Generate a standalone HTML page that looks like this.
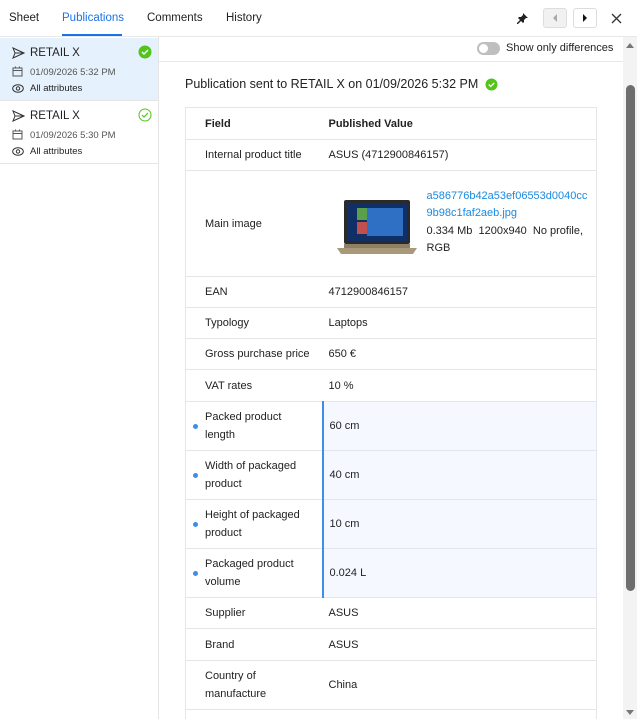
<!DOCTYPE html>
<html style="overflow:hidden;height:719px"><head><meta charset="utf-8"><style>
*{box-sizing:border-box;margin:0;padding:0}
body{width:637px;height:719px;overflow:hidden;font-family:"Liberation Sans",sans-serif;font-size:11px;color:#222;background:#fff;position:relative}
.abs{position:absolute}
.tab{position:absolute;top:12px;font-size:11.5px;color:#222}
.side{position:absolute;left:0;top:37px;width:159px;bottom:0;border-right:1px solid #e5e5e5}
.item{position:absolute;left:0;width:158px;height:63px;border-bottom:1px solid #e5e5e5}
.item .t{position:absolute;left:30px;top:9px;font-size:11.5px}
.item .d{position:absolute;left:30px;top:29px;font-size:9.5px;color:#555}
.item .a{position:absolute;left:30px;top:45px;font-size:9.5px}
table{position:absolute;left:185px;top:107px;width:412px;border-collapse:collapse;border-left:1px solid #e4e6ea;border-right:1px solid #e4e6ea}
td{border-top:1px solid #e4e6ea;border-bottom:1px solid #e4e6ea;padding:0 0 0 19px;line-height:18px;vertical-align:middle}
td:first-child{width:137px;padding-left:19px;position:relative}
td:last-child{padding-left:6px}
tr.h td{background:#f5f9ff}
tr.h td:last-child{border-left:2px solid #3d8eeb}
tr.h td:first-child::before{content:"";position:absolute;left:7px;top:50%;margin-top:-2px;width:5px;height:5px;border-radius:50%;background:#3d8eeb}
</style></head><body>
<div class="tab" style="left:9px">Sheet</div>
<div class="tab" style="left:62px;color:#1a73e8">Publications</div>
<div class="abs" style="left:62px;top:34px;width:60px;height:2px;background:#1a73e8"></div>
<div class="tab" style="left:147px">Comments</div>
<div class="tab" style="left:226px">History</div>
<div class="abs" style="left:0;top:36px;width:637px;height:1px;background:#e8e8e8"></div>
<svg class="abs" style="left:516px;top:12px" width="13" height="13" viewBox="0 0 13 13"><path d="M7 1l5 5-2 0-2 2 0 2-1 1-2-2-3 3-1 0 0-1 3-3-2-2 1-1 2 0 2-2z" fill="#222"/></svg>
<div class="abs" style="left:543px;top:8px;width:24px;height:20px;border:1px solid #ddd;border-radius:3px;background:#f1f1f1"></div>
<svg class="abs" style="left:551px;top:13px" width="8" height="10"><path d="M6 1L2 5l4 4z" fill="#aaa"/></svg>
<div class="abs" style="left:573px;top:8px;width:24px;height:20px;border:1px solid #ddd;border-radius:3px;background:#fff"></div>
<svg class="abs" style="left:581px;top:13px" width="8" height="10"><path d="M2 1l4 4-4 4z" fill="#111"/></svg>
<svg class="abs" style="left:611px;top:13px" width="11" height="11"><path d="M1 1l9 9M10 1l-9 9" stroke="#333" stroke-width="1.3"/></svg>

<div class="side">
 <div class="item" style="top:1px;background:#e5f1fc">
  <svg class="abs" style="left:12px;top:9px" width="13" height="12"><path d="M1 1l11 5-11 5 2-5z M3 6h9" fill="none" stroke="#333" stroke-width="1"/></svg>
  <div class="t">RETAIL X</div>
  <svg class="abs" style="left:138px;top:7px" width="14" height="14"><circle cx="7" cy="7" r="6.5" fill="#52c41a"/><path d="M4 7l2 2 4-4" stroke="#fff" stroke-width="1.4" fill="none"/></svg>
  <svg class="abs" style="left:12px;top:28px" width="11" height="11"><rect x="1" y="2" width="9" height="8" fill="none" stroke="#555"/><path d="M1 4.5h9M3.5 0.5v2M7.5 0.5v2" stroke="#555"/></svg>
  <div class="d">01/09/2026 5:32 PM</div>
  <svg class="abs" style="left:12px;top:46px" width="12" height="9"><ellipse cx="6" cy="4.5" rx="5.3" ry="3.8" fill="none" stroke="#333"/><circle cx="6" cy="4.5" r="1.7" fill="none" stroke="#333"/></svg>
  <div class="a">All attributes</div>
 </div>
 <div class="item" style="top:64px">
  <svg class="abs" style="left:12px;top:9px" width="13" height="12"><path d="M1 1l11 5-11 5 2-5z M3 6h9" fill="none" stroke="#333" stroke-width="1"/></svg>
  <div class="t">RETAIL X</div>
  <svg class="abs" style="left:138px;top:7px" width="14" height="14"><circle cx="7" cy="7" r="6" fill="none" stroke="#52c41a"/><path d="M4 7l2 2 4-4" stroke="#52c41a" stroke-width="1.2" fill="none"/></svg>
  <svg class="abs" style="left:12px;top:28px" width="11" height="11"><rect x="1" y="2" width="9" height="8" fill="none" stroke="#555"/><path d="M1 4.5h9M3.5 0.5v2M7.5 0.5v2" stroke="#555"/></svg>
  <div class="d">01/09/2026 5:30 PM</div>
  <svg class="abs" style="left:12px;top:46px" width="12" height="9"><ellipse cx="6" cy="4.5" rx="5.3" ry="3.8" fill="none" stroke="#333"/><circle cx="6" cy="4.5" r="1.7" fill="none" stroke="#333"/></svg>
  <div class="a">All attributes</div>
 </div>
</div>

<div class="abs" style="left:477px;top:42px;width:23px;height:13px;border-radius:7px;background:#bfbfbf"></div>
<div class="abs" style="left:479px;top:44px;width:9px;height:9px;border-radius:50%;background:#fff"></div>
<div class="abs" style="left:506px;top:42px;font-size:11px">Show only differences</div>
<div class="abs" style="left:159px;top:61px;width:464px;height:1px;background:#e8e8e8"></div>

<div class="abs" style="left:185px;top:77px;font-size:12.5px">Publication sent to RETAIL X on 01/09/2026 5:32 PM</div>
<svg class="abs" style="left:485px;top:78px" width="13" height="13"><circle cx="6.5" cy="6.5" r="6" fill="#52c41a"/><path d="M3.7 6.5l2 2 3.6-3.6" stroke="#fff" stroke-width="1.3" fill="none"/></svg>

<table>
<tr style="height:32px"><td><b>Field</b></td><td><b>Published Value</b></td></tr>
<tr style="height:31px"><td>Internal product title</td><td>ASUS (4712900846157)</td></tr>
<tr style="height:106px"><td>Main image</td><td>
 <div style="position:relative;height:100px">
  <svg style="position:absolute;left:6px;top:24px" width="84" height="60" viewBox="0 0 84 60"><rect x="9" y="2" width="66" height="44" rx="2" fill="#2a2a2a"/><rect x="12" y="5" width="60" height="38" fill="#0f2f66"/><rect x="32" y="10" width="36" height="28" fill="#2f6fc4"/><rect x="22" y="10" width="10" height="12" fill="#5aa04a"/><rect x="22" y="24" width="10" height="12" fill="#c0504d"/><path d="M2 50h80l-4 6H6z" fill="#a8997a"/><rect x="9" y="46" width="66" height="4" fill="#8d8066"/></svg>
  <div style="position:absolute;left:98px;top:14px;line-height:17.5px;width:170px"><span style="color:#1a8ae0">a586776b42a53ef06553d0040cc<br>9b98c1faf2aeb.jpg</span><br>0.334 Mb&nbsp; 1200x940&nbsp; No profile,<br>RGB</div>
 </div></td></tr>
<tr style="height:31px"><td>EAN</td><td>4712900846157</td></tr>
<tr style="height:31px"><td>Typology</td><td>Laptops</td></tr>
<tr style="height:31px"><td>Gross purchase price</td><td>650 €</td></tr>
<tr style="height:32px"><td>VAT rates</td><td>10 %</td></tr>
<tr class="h" style="height:49px"><td style="background:#fff">Packed product<br>length</td><td>60 cm</td></tr>
<tr class="h" style="height:49px"><td style="background:#fff">Width of packaged<br>product</td><td>40 cm</td></tr>
<tr class="h" style="height:49px"><td style="background:#fff">Height of packaged<br>product</td><td>10 cm</td></tr>
<tr class="h" style="height:49px"><td style="background:#fff">Packaged product<br>volume</td><td>0.024 L</td></tr>
<tr style="height:31px"><td>Supplier</td><td>ASUS</td></tr>
<tr style="height:32px"><td>Brand</td><td>ASUS</td></tr>
<tr style="height:49px"><td>Country of<br>manufacture</td><td>China</td></tr>
<tr style="height:30px"><td></td><td></td></tr>
</table>

<div class="abs" style="left:623px;top:37px;width:14px;height:682px;background:#f3f3f3"></div>
<svg class="abs" style="left:625px;top:41px" width="10" height="8"><path d="M1 7l4-5 4 5z" fill="#777"/></svg>
<div class="abs" style="left:626px;top:85px;width:9px;height:506px;border-radius:5px;background:#6e6e6e"></div>
<svg class="abs" style="left:625px;top:709px" width="10" height="8"><path d="M1 1l4 5 4-5z" fill="#777"/></svg>
</body></html>
